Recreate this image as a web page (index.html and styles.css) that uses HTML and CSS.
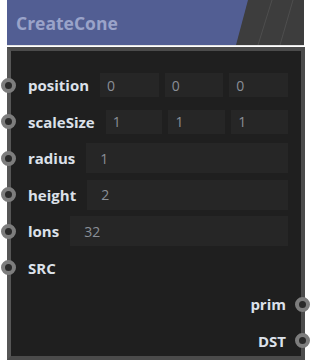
FILE: index.html
```html
<!DOCTYPE html>
<html lang="en">
<head>
  <meta charset="UTF-8" />
  <meta name="viewport" content="width=device-width, initial-scale=1" />
  <title>CreateCone</title>
  <link rel="stylesheet" href="styles.css">
</head>
<body>
  <div class="node">
    <header class="node-header">
      <h1>CreateCone</h1>
      <svg class="header-tail" width="68" height="45" viewBox="0 0 68 45">
        <polygon points="12,0 68,0 68,45 0,45" fill="#3d3d3d" />
        <line x1="36" y1="0" x2="22" y2="45" stroke="#4e4e4e" stroke-width="1" />
        <line x1="57" y1="0" x2="44" y2="45" stroke="#4e4e4e" stroke-width="1" />
      </svg>
    </header>

    <div class="node-body">
      <div class="row">
        <span class="socket in"></span>
        <label>position</label>
        <div class="vec">
          <span class="field">0</span>
          <span class="field">0</span>
          <span class="field">0</span>
        </div>
      </div>
      <div class="row">
        <span class="socket in"></span>
        <label>scaleSize</label>
        <div class="vec">
          <span class="field">1</span>
          <span class="field">1</span>
          <span class="field">1</span>
        </div>
      </div>
      <div class="row">
        <span class="socket in"></span>
        <label>radius</label>
        <span class="field wide">1</span>
      </div>
      <div class="row">
        <span class="socket in"></span>
        <label>height</label>
        <span class="field wide">2</span>
      </div>
      <div class="row">
        <span class="socket in"></span>
        <label>lons</label>
        <span class="field wide">32</span>
      </div>
      <div class="row">
        <span class="socket in"></span>
        <label>SRC</label>
      </div>
      <div class="row out">
        <label>prim</label>
        <span class="socket outp"></span>
      </div>
      <div class="row out">
        <label>DST</label>
        <span class="socket outp"></span>
      </div>
    </div>
  </div>
</body>
</html>
```

FILE: styles.css
```css
*, *::before, *::after { box-sizing: border-box; }
body {
  margin: 0;
  background: #ffffff;
  font-family: 'Open Sans', 'Noto Sans', sans-serif;
  overflow: hidden;
}
.node {
  margin-left: 7px;
  width: 298px;
}
.node-header {
  width: 297px;
  height: 45px;
  background-color: #525e93;
  display: flex;
  justify-content: space-between;
  align-items: center;
  border-bottom: 1px solid #e4e4e4;
  box-sizing: content-box;
}
.node-header h1 {
  margin: 0 0 0 9px;
  font-size: 17.5px;
  font-weight: bold;
  color: #9aa3c9;
}
.header-tail {
  display: block;
  align-self: flex-end;
}
.node-body {
  margin-top: 1px;
  background-color: #1f1f1f;
  border: 4px solid #4b4b4b;
  border-left-color: #565656;
  padding: 19px 0 0;
  display: flex;
  flex-direction: column;
  gap: 6.5px;
  height: 313px;
}
.row {
  position: relative;
  height: 30px;
  display: flex;
  align-items: center;
  gap: 11px;
  padding: 0 13px 0 17px;
}
.row.out {
  justify-content: flex-end;
  padding-right: 15px;
}
.row label {
  font-size: 15px;
  font-weight: bold;
  color: #dce1ea;
  white-space: nowrap;
}
.socket {
  position: absolute;
  top: 7.5px;
  width: 15px;
  height: 15px;
  border-radius: 50%;
  border: 4px solid #7d7d7d;
  background-color: #2a2a2a;
}
.socket.in { left: -10.5px; }
.socket.outp { right: -8.5px; }
.vec {
  flex: 1;
  display: flex;
  gap: 6px;
}
.field {
  flex: 1;
  height: 24px;
  background-color: #262626;
  color: #8a8f97;
  font-size: 14px;
  padding-left: 7px;
  display: flex;
  align-items: center;
}
.field.wide {
  height: 30px;
  padding-left: 14px;
}
```
